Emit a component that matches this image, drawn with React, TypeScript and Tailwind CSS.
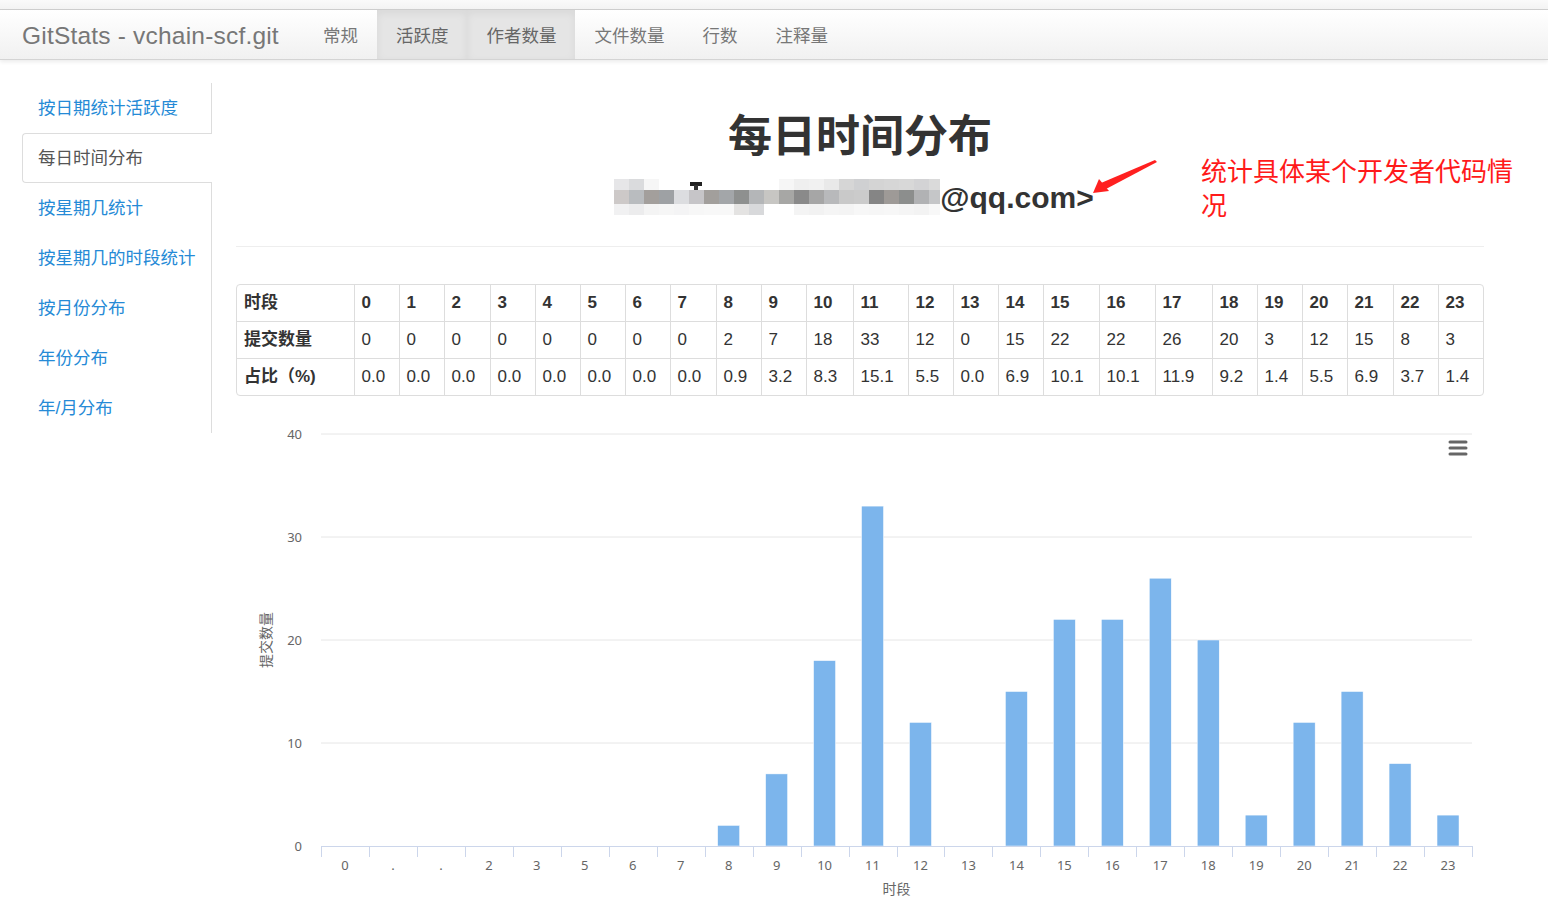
import React from "react";

const navItems = [
  { label: "常规", on: false },
  { label: "活跃度", on: true },
  { label: "作者数量", on: true },
  { label: "文件数量", on: false },
  { label: "行数", on: false },
  { label: "注释量", on: false },
];

const sideItems = ["按日期统计活跃度", "每日时间分布", "按星期几统计", "按星期几的时段统计", "按月份分布", "年份分布", "年/月分布"];

const commits = [0, 0, 0, 0, 0, 0, 0, 0, 2, 7, 18, 33, 12, 0, 15, 22, 22, 26, 20, 3, 12, 15, 8, 3];
const percents = ["0.0", "0.0", "0.0", "0.0", "0.0", "0.0", "0.0", "0.0", "0.9", "3.2", "8.3", "15.1", "5.5", "0.0", "6.9", "10.1", "10.1", "11.9", "9.2", "1.4", "5.5", "6.9", "3.7", "1.4"];
const xLabels = ["0", ".", ".", "2", "3", "5", "6", "7", "8", "9", "10", "11", "12", "13", "14", "15", "16", "17", "18", "19", "20", "21", "22", "23"];

const colW = [
  "w-[117px]", "w-[45px]", "w-[45px]", "w-[46px]", "w-[45px]", "w-[45px]", "w-[45px]", "w-[45px]", "w-[46px]", "w-[45px]",
  "w-[45px]", "w-[47px]", "w-[55px]", "w-[45px]", "w-[45px]", "w-[45px]", "w-[56px]", "w-[56px]", "w-[57px]", "w-[45px]",
  "w-[45px]", "w-[45px]", "w-[46px]", "w-[45px]", "w-[45px]",
];

const mosaicMid = ["#cdc9c8", "#b9bcbf", "#a39f9c", "#9ea1a4", "#dcdde0", "#c6c5c8", "#a29f9c", "#a3a6a9", "#8e908f", "#b4b6b8", "#c7c6c3", "#a7a7a5", "#8a8a8a", "#a6a6a6", "#b8b9bb", "#c9c9c9", "#cbcbcb", "#858585", "#9e9a97", "#8c8e8d", "#b1b2b4", "#c5c6c8"];
const mosaicTop = ["#e6e6e8", "#dadbdd", "#f6f6f6", "#ffffff", "#ffffff", "#ffffff", "#ffffff", "#ffffff", "#ffffff", "#ffffff", "#ffffff", "#f6f6f6", "#efefef", "#f1f1f1", "#e9e9e9", "#d6d6d6", "#cfd0d2", "#d4d4d4", "#d6d6d6", "#d8d8d8", "#d3d3d5", "#dadada"];
const mosaicBot = ["#f1f1f2", "#ececed", "#f4f4f4", "#f6f6f6", "#f4f4f5", "#f7f7f7", "#f8f8f8", "#f8f8f8", "#e4e3e2", "#d8d9db", "#ffffff", "#ffffff", "#f4f4f4", "#f2f2f2", "#f5f5f5", "#f4f4f4", "#f7f7f7", "#f6f6f6", "#f7f7f7", "#f5f5f5", "#f3f3f3", "#f8f8f8"];

function Mosaic() {
  return (
    <svg width="326" height="40" viewBox="0 0 326 40" className="shrink-0">
      {mosaicTop.map((c, i) => (
        <rect key={"t" + i} x={i * 15} y={2} width={15} height={11} fill={c} />
      ))}
      <rect x={76} y={5} width={12} height={4} fill="#222" />
      <rect x={80} y={8} width={4} height={6} fill="#333" />
      {mosaicMid.map((c, i) => (
        <rect key={"m" + i} x={i * 15} y={13} width={15} height={14} fill={c} />
      ))}
      {mosaicBot.map((c, i) => (
        <rect key={"b" + i} x={i * 15} y={27} width={15} height={11} fill={c} />
      ))}
    </svg>
  );
}

function Chart() {
  const left = 85;
  const right = 1236;
  const base = 430;
  const step = (right - left) / 24;
  const unit = 10.3;
  const grid = [40, 30, 20, 10];
  return (
    <svg width="1248" height="488" viewBox="0 0 1248 488" className="block">
      {grid.map((g) => {
        const y = base - g * unit;
        return (
          <g key={g}>
            <line x1={left} x2={right} y1={y} y2={y} stroke="#e6e6e6" strokeWidth="1" />
            <text x={66} y={y + 5} textAnchor="end" fontSize="13" fill="#666" fontFamily="'Noto Sans', sans-serif">
              {g}
            </text>
          </g>
        );
      })}
      <text x={66} y={base + 5} textAnchor="end" fontSize="13" fill="#666" fontFamily="'Noto Sans', sans-serif">
        0
      </text>
      {commits.map((v, i) => {
        const h = v * unit;
        const x = left + i * step + (step - 22) / 2;
        return v > 0 ? <rect key={i} x={x} y={base - h} width={22} height={h} fill="#7cb5ec" stroke="#fff" strokeWidth="0.5" /> : null;
      })}
      <line x1={left} x2={right} y1={base + 0.5} y2={base + 0.5} stroke="#ccd6eb" strokeWidth="1" />
      {Array.from({ length: 25 }).map((_, i) => {
        const x = Math.round(left + i * step) + 0.5;
        return <line key={i} x1={x} x2={x} y1={base} y2={base + 11} stroke="#ccd6eb" strokeWidth="1" />;
      })}
      {xLabels.map((l, i) => (
        <text key={i} x={left + i * step + step / 2} y={base + 24} textAnchor="middle" fontSize="13" fill="#666" fontFamily="'Noto Sans', 'Noto Sans CJK SC', sans-serif">
          {l}
        </text>
      ))}
      <text x={(left + right) / 2} y={478} textAnchor="middle" fontSize="14" fill="#666" fontFamily="'Noto Sans CJK SC', sans-serif">
        时段
      </text>
      <text
        x={31}
        y={224}
        textAnchor="middle"
        fontSize="14"
        fill="#666"
        fontFamily="'Noto Sans CJK SC', sans-serif"
        transform="rotate(-90 31 224)"
        dominantBaseline="middle"
      >
        提交数量
      </text>
      <g stroke="#666" strokeWidth="3" strokeLinecap="round">
        <line x1={1214} x2={1230} y1={26} y2={26} />
        <line x1={1214} x2={1230} y1={32} y2={32} />
        <line x1={1214} x2={1230} y1={38} y2={38} />
      </g>
    </svg>
  );
}

function cellBorder(r: number, c: number) {
  return [c > 0 ? "border-l" : "", r > 0 ? "border-t" : ""].join(" ");
}

export default function App() {
  const rows: { head: string; cells: (string | number)[]; bold: boolean }[] = [
    { head: "时段", cells: commits.map((_, i) => i), bold: true },
    { head: "提交数量", cells: commits, bold: false },
    { head: "占比（%)", cells: percents, bold: false },
  ];

  return (
    <div className="min-h-screen bg-white font-['Liberation_Sans','Noto_Sans_CJK_SC',sans-serif] text-[#333]">
      <div className="h-[10px] border-b border-[#cfcfcf] bg-gradient-to-b from-[#fafafa] to-[#f3f3f3]" />
      <div className="flex h-[50px] items-stretch border-b border-[#d4d4d4] bg-gradient-to-b from-white to-[#f1f1f1] shadow-[0_2px_4px_rgba(0,0,0,0.08)]">
        <div className="flex items-center pl-[22px] pr-[25px] pt-[3px] text-[24.5px] tracking-[0.2px] text-[#777]">GitStats - vchain-scf.git</div>
        {navItems.map((n) => (
          <div
            key={n.label}
            className={
              n.on
                ? "flex items-center bg-[#e5e5e5] px-[19px] pt-[3px] text-[17.5px] text-[#666] shadow-[inset_0_3px_8px_rgba(0,0,0,0.06)]"
                : "flex items-center px-[19px] pt-[3px] text-[17.5px] text-[#777]"
            }
          >
            {n.label}
          </div>
        ))}
      </div>

      <div className="flex items-start pt-[23px]">
        <ul className="ml-[22px] w-[190px] shrink-0 border-r border-[#ddd]">
          {sideItems.map((s, i) =>
            i === 1 ? (
              <li
                key={s}
                className="relative -mr-px flex h-[50px] items-center rounded-l-[4px] border border-r-0 border-[#ddd] bg-white pl-[15px] text-[17.5px] text-[#555]"
              >
                {s}
              </li>
            ) : (
              <li key={s} className="flex h-[50px] items-center pl-[16px] text-[17.5px] text-[#258ad6]">
                {s}
              </li>
            )
          )}
        </ul>

        <div className="relative ml-[24px] w-[1248px] shrink-0">
          <h1 className="mt-[30px] text-center text-[44px] font-bold leading-[48px] text-[#333]">每日时间分布</h1>
          <div className="mt-[16px] flex h-[40px] items-center justify-center pr-[12px]">
            <Mosaic />
            <span className="font-['Liberation_Sans',sans-serif] text-[30px] font-bold text-[#333]">@qq.com&gt;</span>
          </div>
          <div className="absolute left-[965px] top-[72px] w-[320px] text-[26px] leading-[34px] text-[#ff1a1a]">统计具体某个开发者代码情况</div>
          <svg width="75" height="45" viewBox="0 0 75 45" className="absolute left-[849px] top-[71px]">
            <polygon points="70,6 72,8 21,35 16,29" fill="#ff2020" />
            <polygon points="8,39 14,25 24,37" fill="#ff2020" />
          </svg>

          <div className="mt-[29px] border-t border-[#eee]" />

          <div className="mt-[37px] overflow-hidden rounded-[4px] border border-[#ddd]">
            <table className="w-full table-fixed border-collapse text-[17px] leading-[20px]">
              <colgroup>
                {colW.map((w, i) => (
                  <col key={i} className={w} />
                ))}
              </colgroup>
              <tbody>
                {rows.map((r, ri) => (
                  <tr key={r.head}>
                    <td className={"border-[#ddd] px-[7px] py-[8px] font-bold " + cellBorder(ri, 0)}>{r.head}</td>
                    {r.cells.map((c, ci) => (
                      <td
                        key={ci}
                        className={"border-[#ddd] px-[7px] py-[8px] " + (r.bold ? "font-bold " : "") + cellBorder(ri, ci + 1)}
                      >
                        {c}
                      </td>
                    ))}
                  </tr>
                ))}
              </tbody>
            </table>
          </div>

          <div className="mt-[20px]">
            <Chart />
          </div>
        </div>
      </div>
    </div>
  );
}
